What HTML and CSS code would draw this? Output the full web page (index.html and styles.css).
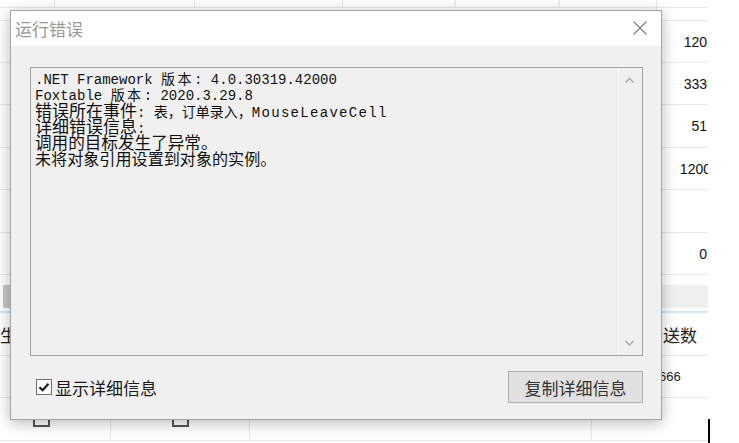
FILE: index.html
```html
<!DOCTYPE html>
<html lang="zh-CN">
<head>
<meta charset="utf-8">
<title>运行错误</title>
<link rel="stylesheet" href="styles.css">
</head>
<body>
<div class="sheet">
  <div class="row r8">
    <div class="cell w55"></div><div class="cell w140"></div><div class="cell w148"></div><div class="cell w113"></div><div class="cell w104"></div><div class="cell w97"></div><div class="num"></div>
  </div>
  <div class="row r13"><div class="cell wide"></div><div class="num"></div></div>
  <div class="row r42"><div class="cell wide"></div><div class="num">120</div></div>
  <div class="row r42"><div class="cell wide"></div><div class="num">333</div></div>
  <div class="row r43"><div class="cell wide"></div><div class="num">51</div></div>
  <div class="row r42"><div class="cell wide"></div><div class="num"><span class="ov">1200</span></div></div>
  <div class="row r43"><div class="cell wide"></div><div class="num"></div></div>
  <div class="row r42"><div class="cell wide"></div><div class="num">0</div></div>
  <div class="gap10"></div>
  <div class="band"><div class="thumb"></div><div class="track"></div></div>
  <div class="gap3"></div>
  <div class="blue"></div>
  <div class="row r43 head">
    <div class="cell b111 first">生</div><div class="cell b139"></div><div class="cell b342"></div><div class="last right">送数</div>
  </div>
  <div class="row r42">
    <div class="cell b111"></div><div class="cell b139"></div><div class="cell b342"></div><div class="last val">666</div>
  </div>
  <div class="row r43">
    <div class="cell b111"><span class="sq sq1"></span></div><div class="cell b139 center"><span class="sq"></span></div><div class="cell b342"></div><div class="last"></div>
  </div>
</div>
<div class="caret"></div>

<div class="dialog">
  <div class="titlebar">
    <span class="title">运行错误</span>
    <svg class="close" width="14" height="14" viewBox="0 0 14 14"><path d="M0.5 0.5 L13.5 13.5 M13.5 0.5 L0.5 13.5" stroke="#7d7d7d" stroke-width="1.1" fill="none"/></svg>
  </div>
  <div class="body">
    <div class="textbox">
      <div class="content">
        <div class="ln">.NET Framework <span class="k14">版本</span>: 4.0.30319.42000</div>
        <div class="ln">Foxtable <span class="k14">版本</span>: 2020.3.29.8</div>
        <div class="ln"><span class="k17">错误所在事件</span>: <span class="k14b">表，订单录入，</span><span class="wide-mono">MouseLeaveCell</span></div>
        <div class="ln"><span class="k17">详细错误信息</span>:</div>
        <div class="ln"><span class="k166">调用的目标发生了异常。</span></div>
        <div class="ln"><span class="k161">未将对象引用设置到对象的实例。</span></div>
      </div>
      <div class="scrollbar">
        <svg width="23" height="14" viewBox="0 0 23 14"><path d="M6.5 9.5 L10.5 5.5 L14.5 9.5" stroke="#a9a9a9" stroke-width="1.5" fill="none"/></svg>
        <svg width="23" height="14" viewBox="0 0 23 14"><path d="M6.5 5 L10.5 9 L14.5 5" stroke="#a9a9a9" stroke-width="1.5" fill="none"/></svg>
      </div>
    </div>
    <div class="footer">
      <label class="check">
        <span class="box"><svg width="14" height="14" viewBox="0 0 14 14"><path d="M2.5 7.2 L5.6 10.2 L11.5 3.8" stroke="#1a1a1a" stroke-width="2.2" fill="none"/></svg></span>
        <span class="label">显示详细信息</span>
      </label>
      <button class="btn">复制详细信息</button>
    </div>
  </div>
</div>
</body>
</html>
```
FILE: styles.css
```css
* { box-sizing: border-box; margin: 0; padding: 0; }
html, body { width: 739px; height: 443px; overflow: hidden; background: #fff; }
body { position: relative; font-family: "Noto Sans CJK SC", "Liberation Sans", sans-serif; }

/* background sheet */
.sheet { width: 708px; overflow: hidden; }
.row { display: flex; border-bottom: 1px solid #e8e8e8; }
.r8 { height: 8px; }
.r13 { height: 13px; }
.r42 { height: 42px; }
.r43 { height: 43px; }
.cell { border-right: 1px solid #e8e8e8; height: 100%; }
.w55 { width: 55px; }
.w140 { width: 140px; }
.w148 { width: 148px; }
.w113 { width: 113px; }
.w104 { width: 104px; }
.w97 { width: 97px; }
.wide { width: 657px; }
.num { width: 51px; display: flex; align-items: center; justify-content: flex-end; padding-right: 1px; font-family: "Liberation Sans", sans-serif; font-size: 14px; color: #111; white-space: nowrap; }
.ov { margin-right: -4px; }
.gap10 { height: 10px; }
.gap3 { height: 3px; }
.band { height: 23px; display: flex; padding-left: 3px; }
.thumb { width: 300px; background: #c6c6c6; }
.track { flex: 1; background: #f0f0f0; }
.blue { height: 2px; background: #d2e7f8; }
.b111 { width: 111px; }
.b139 { width: 139px; }
.b342 { width: 342px; }
.last { flex: 1; height: 100%; }
.head { font-size: 17px; color: #222; }
.first { display: flex; align-items: center; }
.right { display: flex; align-items: center; justify-content: flex-end; padding-right: 11px; }
.val { display: flex; align-items: center; padding-left: 67px; font-family: "Liberation Sans", sans-serif; font-size: 13px; color: #222; }
.center { display: flex; align-items: center; justify-content: center; }
.b111 { display: flex; align-items: center; }
.sq { display: block; width: 17px; height: 16px; border: 2px solid #555; }
.sq1 { margin-left: 33px; }
.caret { position: absolute; left: 708px; top: 419px; width: 2px; height: 24px; background: #000; }

/* dialog */
.dialog { position: absolute; left: 10px; top: 10px; width: 652px; height: 410px; border: 1px solid #a5a5a5; background: #f0f0f0; box-shadow: 0 3px 14px rgba(0,0,0,0.28); display: flex; flex-direction: column; }
.titlebar { height: 35px; background: #fff; display: flex; align-items: center; justify-content: space-between; padding: 0 14px 0 4px; }
.title { font-size: 17px; color: #989898; line-height: 1; }
.close { display: block; margin-top: -1px; }
.body { flex: 1; padding: 21px 18px 0 19px; display: flex; flex-direction: column; }
.textbox { height: 289px; border: 1px solid #a0a0a0; display: flex; background: #f0f0f0; }
.content { flex: 1; padding: 2px 0 0 4px; font-family: "Liberation Mono", "Noto Sans CJK SC", monospace; font-size: 14px; color: #111; }
.ln { height: 16px; line-height: 16px; white-space: pre; }
.ln span { line-height: 16px; font-family: "Noto Sans CJK SC", sans-serif; }
.k14 { font-size: 14px; letter-spacing: 2.5px; }
.k14b { font-size: 14px; }
.k17 { font-size: 17px; }
.k166 { font-size: 16.6px; }
.k161 { font-size: 16.1px; }
.ln .wide-mono { font-family: "Liberation Mono", monospace; letter-spacing: 1.3px; }
.scrollbar { width: 24px; border-left: 1px solid #fbfbfb; display: flex; flex-direction: column; justify-content: space-between; padding: 5px 0; }
.scrollbar svg { display: block; }
.footer { margin-top: 15px; height: 32px; display: flex; align-items: center; justify-content: space-between; }
.check { display: flex; align-items: center; margin-left: 6px; }
.box { width: 16px; height: 16px; border: 1px solid #6f6f6f; background: #fff; display: flex; align-items: center; justify-content: center; }
.box svg { display: block; }
.label { margin-left: 3px; font-size: 17px; color: #1a1a1a; line-height: 1; }
.btn { width: 135px; height: 32px; border: 1px solid #adadad; background: #e1e1e1; font-family: "Noto Sans CJK SC", sans-serif; font-size: 17px; color: #333; }
```
